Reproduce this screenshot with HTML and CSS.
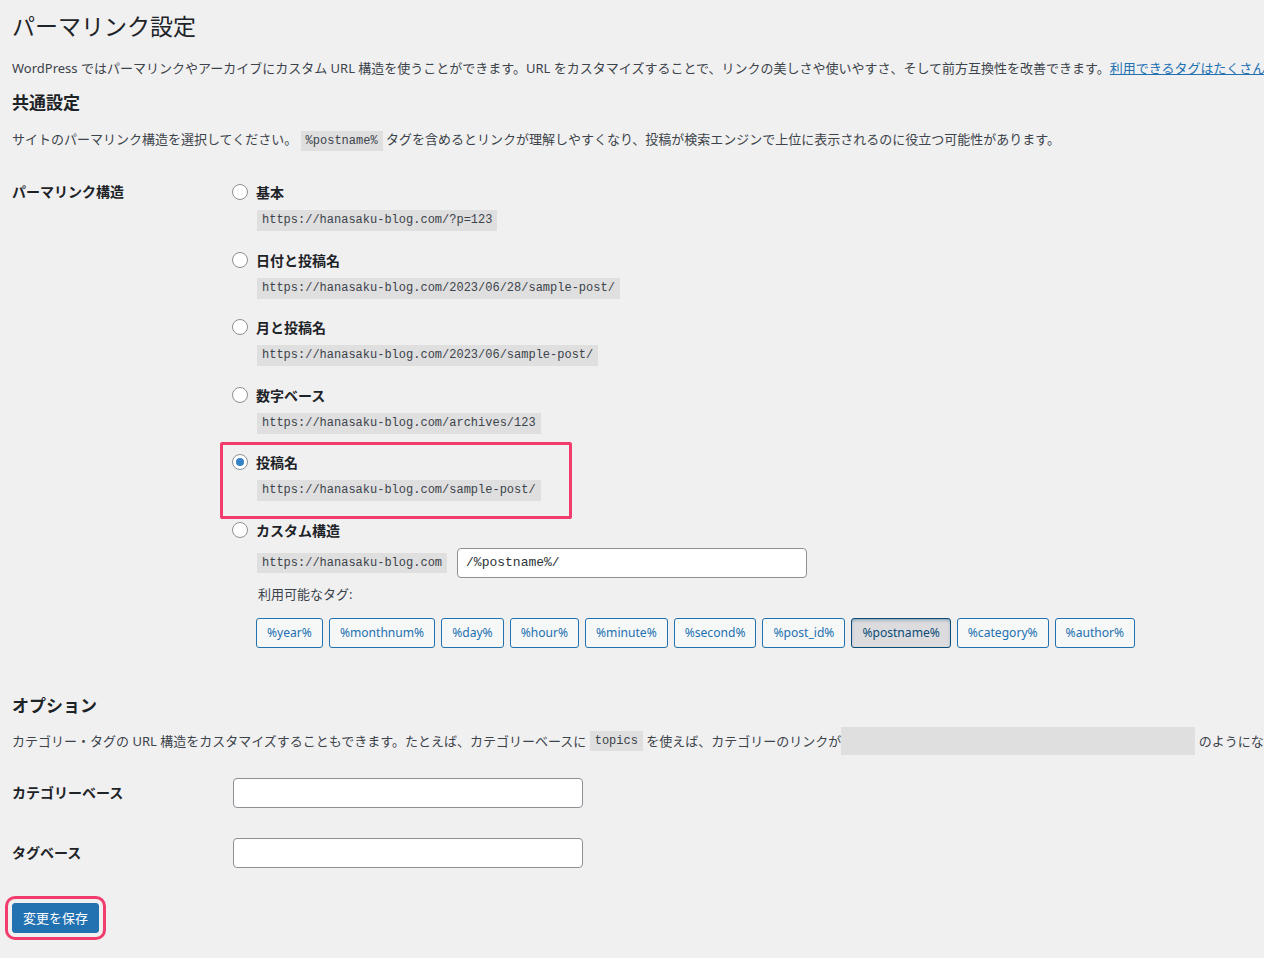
FILE: index.html
```html
<!DOCTYPE html>
<html lang="ja">
<head>
<meta charset="utf-8">
<title>パーマリンク設定</title>
<link rel="stylesheet" href="styles.css">
</head>
<body>
<div class="wrap">
  <h1 class="page-title">パーマリンク設定</h1>
  <p class="desc intro">WordPress ではパーマリンクやアーカイブにカスタム URL 構造を使うことができます。URL をカスタマイズすることで、リンクの美しさや使いやすさ、そして前方互換性を改善できます。<a href="#" class="link">利用できるタグはたくさんあります。</a></p>

  <h2 class="section-title first">共通設定</h2>
  <p class="desc choose">サイトのパーマリンク構造を選択してください。 <code class="code">%postname%</code> タグを含めるとリンクが理解しやすくなり、投稿が検索エンジンで上位に表示されるのに役立つ可能性があります。</p>

  <div class="form-table structure">
    <div class="th">パーマリンク構造</div>
    <div class="td">
      <div class="option">
        <label class="opt-label"><span class="radio"></span>基本</label>
        <code class="code opt-code">https://hanasaku-blog.com/?p=123</code>
      </div>
      <div class="option">
        <label class="opt-label"><span class="radio"></span>日付と投稿名</label>
        <code class="code opt-code">https://hanasaku-blog.com/2023/06/28/sample-post/</code>
      </div>
      <div class="option">
        <label class="opt-label"><span class="radio"></span>月と投稿名</label>
        <code class="code opt-code">https://hanasaku-blog.com/2023/06/sample-post/</code>
      </div>
      <div class="option">
        <label class="opt-label"><span class="radio"></span>数字ベース</label>
        <code class="code opt-code">https://hanasaku-blog.com/archives/123</code>
      </div>
      <div class="option highlighted">
        <label class="opt-label"><span class="radio checked"></span>投稿名</label>
        <code class="code opt-code">https://hanasaku-blog.com/sample-post/</code>
        <span class="mark-box"></span>
      </div>
      <div class="option custom">
        <label class="opt-label"><span class="radio"></span>カスタム構造</label>
        <div class="custom-row">
          <code class="code opt-code">https://hanasaku-blog.com</code>
          <input class="text-input mono wide" type="text" value="/%postname%/">
        </div>
        <div class="tags-label">利用可能なタグ:</div>
        <div class="tags">
          <button class="tag">%year%</button>
          <button class="tag">%monthnum%</button>
          <button class="tag">%day%</button>
          <button class="tag">%hour%</button>
          <button class="tag">%minute%</button>
          <button class="tag">%second%</button>
          <button class="tag">%post_id%</button>
          <button class="tag active">%postname%</button>
          <button class="tag">%category%</button>
          <button class="tag">%author%</button>
        </div>
      </div>
    </div>
  </div>

  <h2 class="section-title options-title">オプション</h2>
  <p class="desc options-desc">カテゴリー・タグの URL 構造をカスタマイズすることもできます。たとえば、カテゴリーベースに <code class="code">topics</code> を使えば、カテゴリーのリンクが<span class="blank-code"></span> のようになります。空欄の場合はデフォルトのものが使われます。</p>

  <div class="form-row first-row">
    <div class="th">カテゴリーベース</div>
    <input class="text-input wide" type="text">
  </div>
  <div class="form-row second-row">
    <div class="th">タグベース</div>
    <input class="text-input wide" type="text">
  </div>

  <div class="submit">
    <button class="primary">変更を保存</button>
  </div>
</div>
</body>
</html>
```

FILE: styles.css
```css
html, body {
  margin: 0;
  padding: 0;
  background: #f0f0f1;
  overflow: hidden;
}
body {
  font-family: "Noto Sans", "Noto Sans CJK JP", sans-serif;
  font-size: 13px;
  color: #3c434a;
  width: 1264px;
  height: 958px;
}
.wrap {
  padding-left: 12px;
  display: flex;
  flex-direction: column;
  align-items: flex-start;
}
.page-title {
  margin: 11px 0 0;
  font-size: 23px;
  line-height: 30px;
  font-weight: 400;
  color: #1d2327;
}
.desc {
  margin: 0;
  line-height: 20px;
  white-space: nowrap;
}
.intro { margin-top: 17px; }
.link { color: #2271b1; text-decoration: underline; }
.section-title {
  margin: 0;
  font-size: 17px;
  line-height: 24px;
  font-weight: 700;
  color: #1d2327;
}
.section-title.first { margin-top: 13px; }
.choose { margin-top: 14px; }
.code {
  font-family: "Liberation Mono", "DejaVu Sans Mono", monospace;
  font-size: 12px;
  background: rgba(0, 0, 0, 0.07);
  padding: 0 5px;
  line-height: 20px;
  display: inline-block;
  color: #3c434a;
}
.form-table {
  display: grid;
  grid-template-columns: 220px 1fr;
  margin-top: 31px;
}
.th {
  font-size: 14px;
  font-weight: 700;
  line-height: 20px;
  color: #1d2327;
}
.option {
  position: relative;
  display: flex;
  flex-direction: column;
  align-items: flex-start;
  margin-bottom: 18.5px;
}
.opt-label {
  display: flex;
  align-items: center;
  gap: 8px;
  height: 20px;
  font-size: 14px;
  font-weight: 700;
  color: #1d2327;
}
.radio {
  width: 16px;
  height: 16px;
  box-sizing: border-box;
  border: 1px solid #8c8f94;
  border-radius: 50%;
  background: #fff;
  display: flex;
  align-items: center;
  justify-content: center;
}
.radio.checked::before {
  content: "";
  width: 8px;
  height: 8px;
  border-radius: 50%;
  background: #3582c4;
}
.opt-code {
  margin-top: 8px;
  margin-left: 25px;
  line-height: 21px;
}
.mark-box {
  position: absolute;
  left: -12px;
  top: -10px;
  width: 352px;
  height: 77px;
  box-sizing: border-box;
  border: 3px solid #f23c6d;
  border-radius: 2px;
}
.custom { margin-bottom: 0; }
.custom-row {
  display: flex;
  align-items: center;
  gap: 10px;
  margin-top: 8px;
  margin-left: 25px;
  height: 30px;
}
.custom-row .opt-code { margin: 0; line-height: 20px; }
.text-input {
  box-sizing: border-box;
  height: 30px;
  border: 1px solid #8c8f94;
  border-radius: 4px;
  background: #fff;
  padding: 0 8px;
  font-family: "Noto Sans", "Noto Sans CJK JP", sans-serif;
  font-size: 14px;
  color: #2c3338;
  margin: 0;
}
.text-input.mono {
  font-family: "Liberation Mono", "DejaVu Sans Mono", monospace;
  font-size: 13px;
}
.wide { width: 350px; }
.tags-label {
  margin-top: 6px;
  margin-left: 26px;
  line-height: 20px;
}
.tags {
  display: flex;
  gap: 6px;
  margin-top: 14px;
  margin-left: 24px;
}
.tag {
  font-family: "Noto Sans", "Noto Sans CJK JP", sans-serif;
  font-size: 12.1px;
  height: 30px;
  padding: 0 10px;
  border: 1px solid #2271b1;
  border-radius: 3px;
  background: #f6f7f7;
  color: #2271b1;
  white-space: nowrap;
}
.tag.active {
  background: #dcdcde;
  border-color: #0a4b78;
  color: #0a4b78;
  box-shadow: inset 0 2px 5px -3px #0a4b78;
}
.options-title { margin-top: 46px; }
.options-desc {
  margin-top: 9px;
  line-height: 28px;
}
.options-desc .code { vertical-align: middle; line-height: 20px; position: relative; top: -1px; }
.blank-code {
  display: inline-block;
  width: 354px;
  height: 28px;
  background: rgba(0, 0, 0, 0.07);
  vertical-align: top;
}
.form-row {
  display: grid;
  grid-template-columns: 221px 350px;
  align-items: center;
}
.first-row { margin-top: 23px; }
.second-row { margin-top: 30px; }
.submit { margin-top: 35px; }
.primary {
  font-family: "Noto Sans", "Noto Sans CJK JP", sans-serif;
  font-size: 13px;
  height: 30px;
  padding: 0 10px;
  border: 1px solid #2271b1;
  border-radius: 3px;
  background: #2271b1;
  color: #fff;
  outline: 3px solid #f23c6d;
  outline-offset: 4px;
}
```
